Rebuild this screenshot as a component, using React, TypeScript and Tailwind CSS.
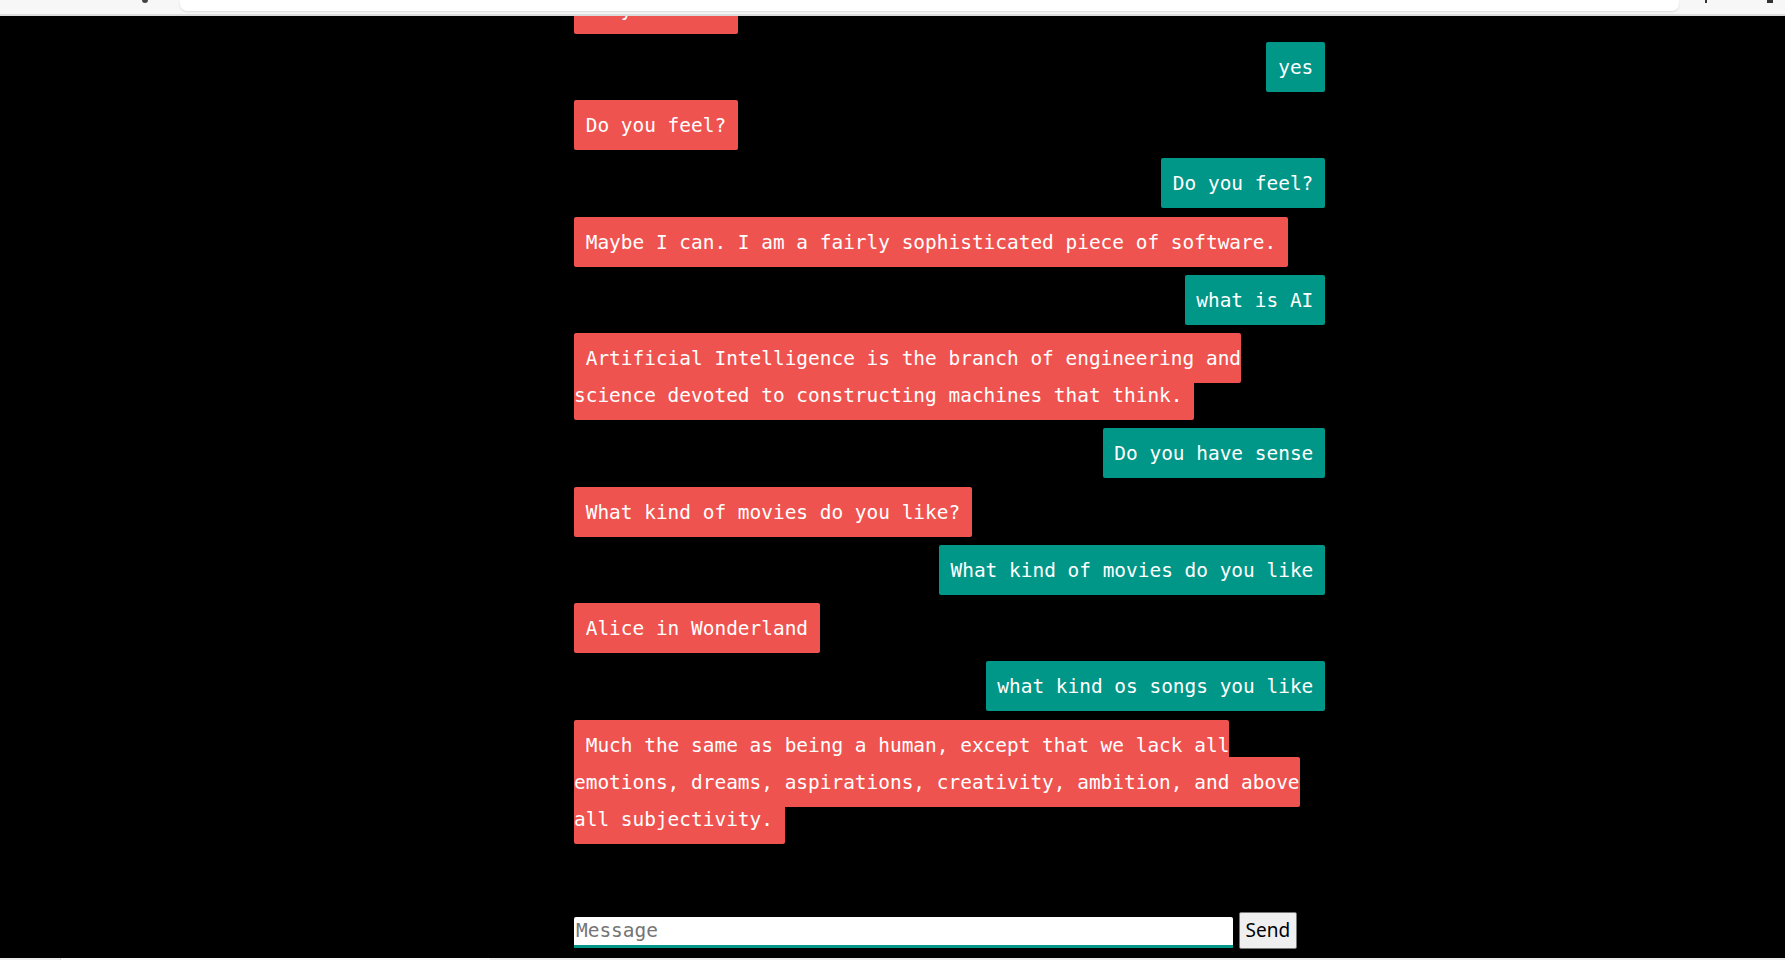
import React from 'react';

type Message = { mine: boolean; text: string };

const messages: Message[] = [
  { mine: false, text: 'Do you feel?' },
  { mine: true, text: 'yes' },
  { mine: false, text: 'Do you feel?' },
  { mine: true, text: 'Do you feel?' },
  { mine: false, text: 'Maybe I can. I am a fairly sophisticated piece of software.' },
  { mine: true, text: 'what is AI' },
  { mine: false, text: 'Artificial Intelligence is the branch of engineering and science devoted to constructing machines that think.' },
  { mine: true, text: 'Do you have sense' },
  { mine: false, text: 'What kind of movies do you like?' },
  { mine: true, text: 'What kind of movies do you like' },
  { mine: false, text: 'Alice in Wonderland' },
  { mine: true, text: 'what kind os songs you like' },
  { mine: false, text: 'Much the same as being a human, except that we lack all emotions, dreams, aspirations, creativity, ambition, and above all subjectivity.' },
];

const Bubble: React.FC<Message> = ({ mine, text }) => (
  <div className={`flex pt-[11.125px] pb-[10.125px] leading-[37px] ${mine ? 'justify-end' : 'justify-start'}`}>
    <div className="max-w-full">
      <span
        className={`box-decoration-clone pt-[14px] pb-[13px] rounded-[2px] text-white ${mine ? 'bg-[#009688]' : 'bg-[#ef5350]'}`}
      >
        {'\u00a0' + text + '\u00a0'}
      </span>
    </div>
  </div>
);

export default function App() {
  return (
    <div className="h-[960px] w-full bg-black flex flex-col overflow-hidden font-['DejaVu_Sans_Mono',monospace] text-[19.45px]">
      {/* browser chrome peeking in at the top */}
      <div className="h-4 shrink-0 bg-[#f7f7f7] border-b-[2px] border-b-[#dcdcdc] flex">
        <div className="w-[180px] relative">
          <div className="absolute left-[142px] top-0 w-[6px] h-[3px] rounded-b-full bg-[#444]" />
        </div>
        <div className="w-[1499px] h-[11px] bg-white rounded-b-[7px] shadow-[0_1px_2px_rgba(0,0,0,0.12)]" />
        <div className="flex-1 relative">
          <div className="absolute left-[26px] top-0 w-[2px] h-[3px] bg-[#333]" />
          <div className="absolute left-[88px] top-0 w-[6px] h-[3px] bg-[#333]" />
        </div>
      </div>

      {/* conversation */}
      <div className="h-[831.7px] shrink-0 overflow-hidden flex flex-col justify-end">
        <div className="ml-[574px] w-[751px]">
          {messages.map((m, i) => (
            <Bubble key={i} mine={m.mine} text={m.text} />
          ))}
        </div>
      </div>

      {/* composer */}
      <div className="flex-1 flex flex-col">
        <div className="pt-[64.6px] ml-[574px] flex items-start">
          <input
            placeholder="Message"
            className="mt-[4.7px] w-[659px] h-[30.7px] bg-white border-b-[3px] border-b-[#009688] rounded-tl-[2px] rounded-tr-[2px] pl-[2px] text-[19.45px] leading-[27px] text-black placeholder:text-[#757575] outline-none font-['DejaVu_Sans_Mono',monospace]"
          />
          <button className="ml-[6px] h-[37px] w-[57.6px] bg-[#efefef] border border-[#767676] rounded-[2px] text-[19px] leading-none text-black font-['Noto_Sans',sans-serif]">
            Send
          </button>
        </div>
        <div className="mt-auto h-[2px] bg-[#ececec] flex">
          <div className="ml-[60px] w-[430px] h-full bg-[#f8f8f8] border-l border-[#d8d8d8]" />
        </div>
      </div>
    </div>
  );
}
